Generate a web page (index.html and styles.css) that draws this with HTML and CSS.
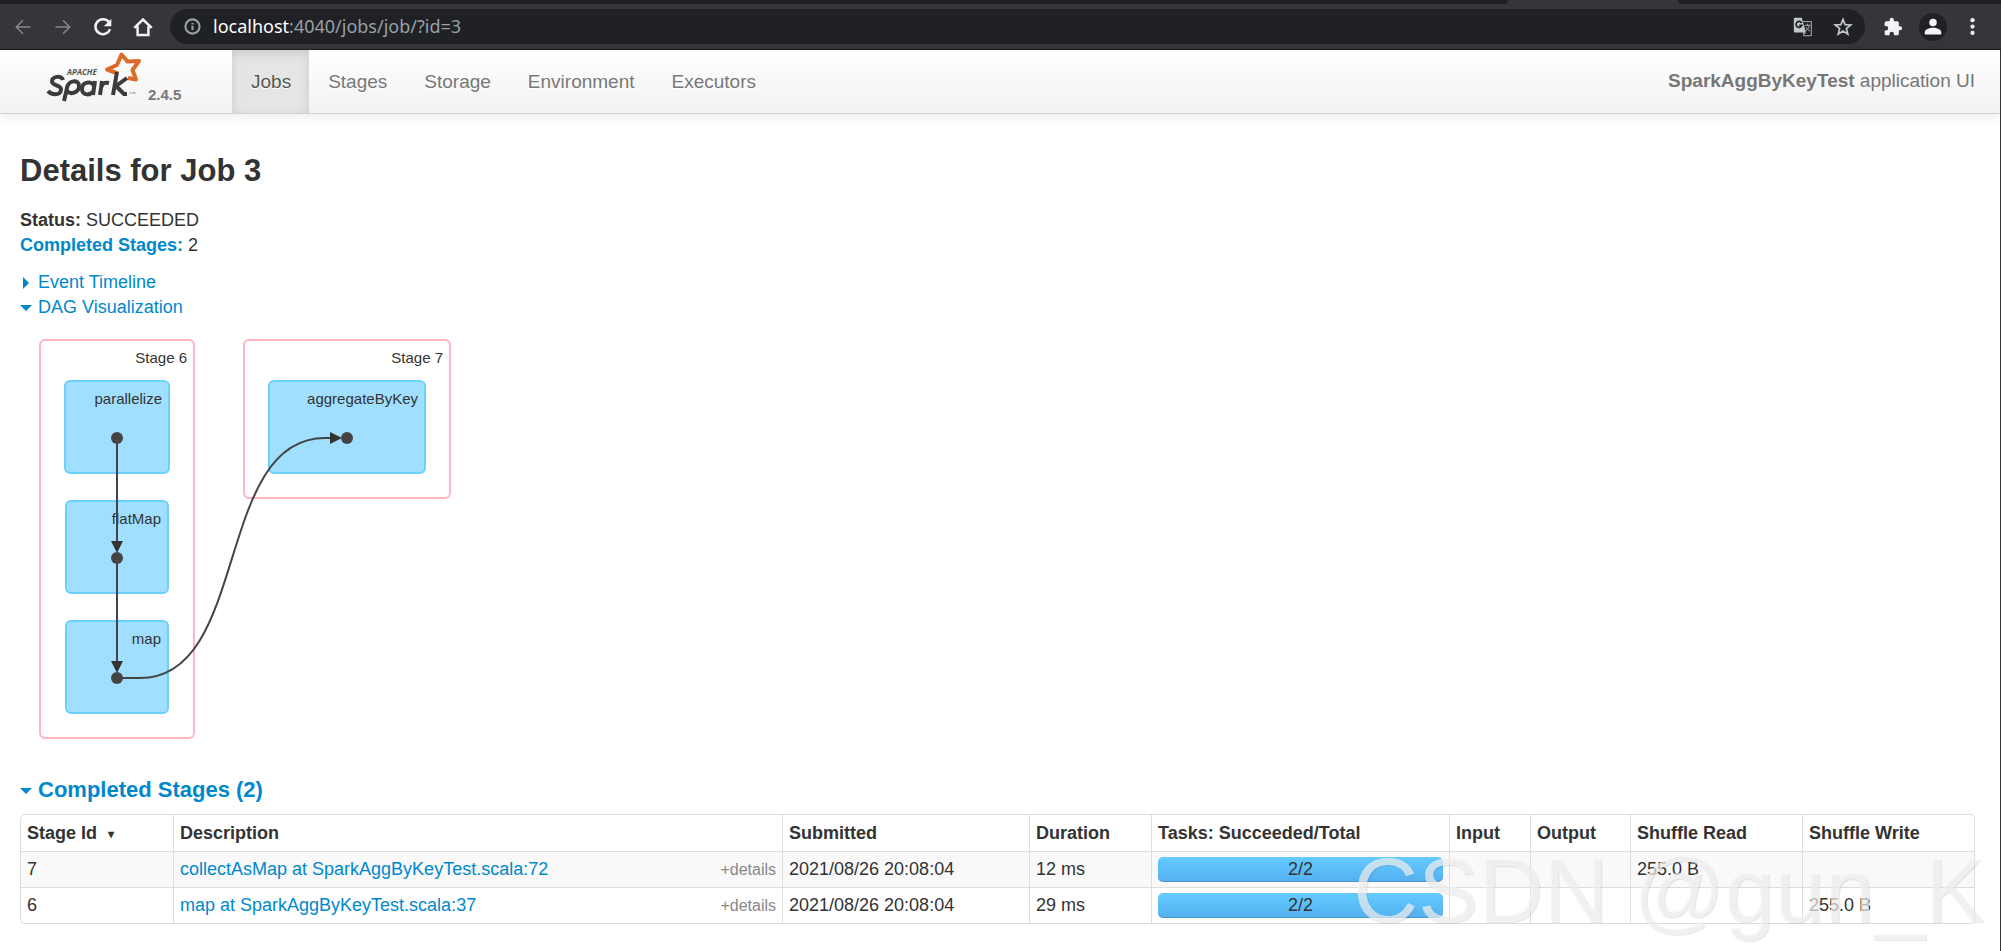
FILE: index.html
```
<!DOCTYPE html>
<html lang="en">
<head>
<meta charset="utf-8">
<title>SparkAggByKeyTest - Details for Job 3</title>
<link rel="stylesheet" href="styles.css">
</head>
<body>
<div class="browser">
  <div class="tabstrip"><span class="tab-gap"></span><span class="tab-active"></span><span class="tab-rest"></span></div>
  <div class="toolbar">
    <button class="tool dim" aria-label="Back"><svg viewBox="0 0 24 24"><path d="M22 12H4M12 3L3 12l9 9" class="line"/></svg></button>
    <button class="tool dim" aria-label="Forward"><svg viewBox="0 0 24 24"><path d="M2 12h18M12 3l9 9-9 9" class="line"/></svg></button>
    <button class="tool" aria-label="Reload"><svg viewBox="0 0 24 24"><path d="M19 6A9 9 0 1 0 20.500 14.500" class="line bold"/><path d="M22 2v9h-9z" class="solid"/></svg></button>
    <button class="tool" aria-label="Home"><svg viewBox="0 0 24 24"><path d="M1.500 13L12 3l10.500 10M5.500 11V21.500h13V11" class="line bold"/></svg></button>
    <div class="omnibox">
      <svg class="info" viewBox="0 0 24 24"><circle cx="12" cy="12" r="10" class="line bold"/><path d="M12 11v6M12 7v2" class="line bold"/></svg>
      <div class="address"><span class="host">localhost</span>:4040/jobs/job/?id=3</div>
      <button class="mark" aria-label="Translate"><svg viewBox="0 0 24 24"><path d="M11 5.500h11v17H12" class="thin"/><path d="M2.500 1h8l5 17.500h-13a1.500 1.500 0 0 1-1.500-1.500V2.500A1.500 1.500 0 0 1 2.500 1z" class="solid"/><path d="M10.500 7.200A3.600 3.600 0 1 0 10.700 10H7.500" class="cut"/><path d="M14 10h7M17.500 8v2M19.800 10c-.6 3-2.300 5-4.500 6.500M15.500 12c1 2 3 4 5 5" class="thin"/><path d="M12 18.500h3.500L12.500 22z" class="solid"/></svg></button>
      <button class="mark" aria-label="Bookmark"><svg viewBox="0 0 24 24"><path d="M12 2.800l2.500 6.400 6.800.4-5.300 4.300 1.800 6.600-5.800-3.700-5.800 3.700L8 13.900 2.700 9.600l6.800-.4z" class="line"/></svg></button>
    </div>
    <button class="tool ext" aria-label="Extensions"><svg viewBox="0 0 24 24"><path d="M20.500 11H19V7a2 2 0 0 0-2-2h-4V3.500a2.500 2.500 0 0 0-5 0V5H4a2 2 0 0 0-2 2v3.800h1.500a2.700 2.700 0 0 1 0 5.400H2V20a2 2 0 0 0 2 2h3.800v-1.500a2.700 2.700 0 0 1 5.400 0V22H17a2 2 0 0 0 2-2v-4h1.500a2.500 2.500 0 0 0 0-5z" class="solid"/></svg></button>
    <button class="avatar" aria-label="Profile"><svg viewBox="0 0 24 24"><circle cx="12" cy="6" r="5" class="solid"/><path d="M1 22v-3c0-4 6-6 11-6s11 2 11 6v3z" class="solid"/></svg></button>
    <button class="tool menu" aria-label="Menu"><svg viewBox="0 0 24 24"><circle cx="12" cy="3" r="3" class="solid"/><circle cx="12" cy="12" r="3" class="solid"/><circle cx="12" cy="21" r="3" class="solid"/></svg></button>
  </div>
</div>
<div class="page">
  <header class="navbar">
    <a class="brand" href="#">
      <svg class="logo" viewBox="0 0 98 52" role="img" aria-label="Apache Spark">
        <path d="M74 23.500L63 19.500l10-4.500L77.500 4.500 83.500 11.500 95 11l-6.500 9L92 29.500 84 28" class="star"/>
        <text x="23" y="25" class="apache">APACHE</text>
        <g class="letters">
          <path d="M19 30c-1-5-12-4-11 2 1 4 10 3 9 8-1 6-10 5-13 1"/>
          <path d="M20 51l3-13c1-8 12-9 12-2s-9 9-12 5"/>
          <path d="M51 31l-2 14M50 36c-2-6-12-4-12 3s9 7 12 1"/>
          <path d="M56 45l2-14M57 38c1-5 4-6 8-5"/>
          <path d="M69 45l4-23M83 28L72 36l8 8h3"/>
        </g>
        <path d="M85 43h3M89 44v-2l1 1 1-1v2" class="tm"/>
      </svg>
      <span class="version">2.4.5</span>
    </a>
    <nav class="nav">
      <a href="#" class="active">Jobs</a><a href="#">Stages</a><a href="#">Storage</a><a href="#">Environment</a><a href="#">Executors</a>
    </nav>
    <p class="app"><strong>SparkAggByKeyTest</strong> application UI</p>
  </header>
  <main class="content">
    <h1>Details for Job 3</h1>
    <ul class="summary">
      <li><strong>Status:</strong> SUCCEEDED</li>
      <li><a href="#completed"><strong>Completed Stages:</strong></a> 2</li>
    </ul>
    <div class="toggles">
      <a href="#"><span class="arrow right"></span>Event Timeline</a>
      <a href="#dag"><span class="arrow down"></span>DAG Visualization</a>
    </div>
    <svg id="dag" class="dag" width="440" height="410" viewBox="20 330 440 410" role="img" aria-label="DAG Visualization">
      <g class="stage"><rect x="40" y="340" width="154" height="398" rx="5"/><rect x="244" y="340" width="206" height="158" rx="5"/></g>
      <g class="op"><rect x="65" y="381" width="104" height="92" rx="5"/><rect x="66" y="501" width="102" height="92" rx="5"/><rect x="66" y="621" width="102" height="92" rx="5"/><rect x="269" y="381" width="156" height="92" rx="5"/></g>
      <g class="label"><text x="187" y="363">Stage 6</text><text x="443" y="363">Stage 7</text><text x="162" y="404">parallelize</text><text x="161" y="524">flatMap</text><text x="161" y="644">map</text><text x="418" y="404">aggregateByKey</text></g>
      <g class="edge"><path d="M117 438V546"/><path d="M117 558V666"/><path d="M117 678H140C250 678 214 438 325 438H336"/></g>
      <g class="head"><path d="M111 541h12l-6 12z"/><path d="M111 661h12l-6 12z"/><path d="M330 432v12l12-6z"/></g>
      <g class="node"><circle cx="117" cy="438" r="6"/><circle cx="117" cy="558" r="6"/><circle cx="117" cy="678" r="6"/><circle cx="347" cy="438" r="6"/></g>
    </svg>
    <h2 id="completed"><a href="#completed"><span class="arrow down"></span>Completed Stages (2)</a></h2>
    <table class="stages">
      <colgroup><col class="c-id"><col><col class="c-sub"><col class="c-dur"><col class="c-task"><col class="c-in"><col class="c-out"><col class="c-shuf"><col class="c-shuf"></colgroup>
      <thead><tr><th>Stage Id <span class="sort">▾</span></th><th>Description</th><th>Submitted</th><th>Duration</th><th>Tasks: Succeeded/Total</th><th>Input</th><th>Output</th><th>Shuffle Read</th><th>Shuffle Write</th></tr></thead>
      <tbody>
        <tr><td>7</td><td><div class="desc"><a href="#">collectAsMap at SparkAggByKeyTest.scala:72</a><span class="details">+details</span></div></td><td>2021/08/26 20:08:04</td><td>12 ms</td><td class="task"><div class="bar">2/2</div></td><td></td><td></td><td>255.0 B</td><td></td></tr>
        <tr><td>6</td><td><div class="desc"><a href="#">map at SparkAggByKeyTest.scala:37</a><span class="details">+details</span></div></td><td>2021/08/26 20:08:04</td><td>29 ms</td><td class="task"><div class="bar">2/2</div></td><td></td><td></td><td></td><td>255.0 B</td></tr>
      </tbody>
    </table>
  </main>
  <div class="watermark">CSDN @gun_K</div>
</div>
</body>
</html>
```
FILE: styles.css
```
* { box-sizing: border-box; }
body { margin: 0; min-height: 100vh; display: flex; flex-direction: column; background: #fff; color: #333; font: 18px/25px "Liberation Sans", Arial, sans-serif; }
a { color: #08c; text-decoration: none; }
button { border: 0; padding: 0; background: none; color: inherit; display: flex; align-items: center; justify-content: center; }

.browser { background: #35363a; border-bottom: 1px solid #202124; }
.tabstrip { display: flex; height: 4px; }
.tab-gap { flex: 1; background: #202124; border-bottom-right-radius: 4px; }
.tab-active { width: 170px; }
.tab-rest { width: 323px; background: #202124; border-bottom-left-radius: 4px; }
.toolbar { display: flex; align-items: center; height: 45px; padding: 0 14px 0 3px; color: #f1f3f4; }
.tool { width: 40px; height: 40px; }
.tool svg { width: 20px; height: 20px; }
.tool.dim { color: #87888b; }
.tool.dim svg { width: 18px; height: 18px; }
.omnibox { flex: 1; display: flex; align-items: center; height: 35px; margin: 0 10px 0 7px; padding: 0 12px 0 14px; border-radius: 18px; background: #202124; color: #9aa0a6; }
.info { width: 17px; height: 17px; margin-right: 12px; }
.address { flex: 1; font: 18px/25px "Noto Sans", "Open Sans", sans-serif; }
.host { color: #fff; }
.mark { width: 20px; height: 20px; margin-left: 20px; color: #c4c7ca; }
.mark svg { width: 20px; height: 20px; }
.ext { width: 36px; }
.avatar { width: 28px; height: 28px; margin: 0 10px 0 8px; border-radius: 50%; background: #202124; }
.avatar svg { width: 18px; height: 18px; }
.tool.menu { width: 30px; }
.tool.menu svg { width: 17px; height: 17px; }
.line, .thin, .cut { fill: none; stroke: currentColor; stroke-width: 2; }
.bold { stroke-width: 3; }
.thin { stroke-width: 1; }
.cut { stroke: #202124; }
.solid { fill: currentColor; }

.page { position: relative; flex: 1; border-right: 1px solid #35363a; }
.navbar { display: flex; height: 64px; background: linear-gradient(#fff, #f2f2f2); border-bottom: 1px solid #d4d4d4; box-shadow: 0 1px 12px rgba(0,0,0,.1); }
.brand { display: flex; width: 232px; padding-left: 44px; color: #777; }
.logo { width: 98px; height: 52px; }
.star { fill: none; stroke: #dc6a28; stroke-width: 4; stroke-linejoin: round; }
.apache { font: italic bold 8px "Open Sans", sans-serif; fill: #555; }
.letters { fill: none; stroke: #3c3a3b; stroke-width: 4; stroke-linejoin: round; }
.tm { fill: none; stroke: #aaa; stroke-width: 1; }
.version { margin: 32px 0 0 6px; font-size: 15px; font-weight: bold; }
.nav { display: flex; flex: 1; }
.nav a { padding: 19px 18px 0 19px; font-size: 19px; color: #777; text-shadow: 0 1px 0 #fff; }
.nav .active { color: #555; background: #e5e5e5; box-shadow: inset 0 3px 10px rgba(0,0,0,.125); }
.app { margin: 18px 25px 0 0; font-size: 19px; color: #777; }

.content { padding: 0 25px 0 20px; }
h1 { margin: 32px 0 12px; font-size: 31px; line-height: 50px; }
.summary { list-style: none; margin: 0; padding: 0; }
.toggles { display: flex; flex-direction: column; align-items: flex-start; margin-top: 12px; }
.arrow { display: inline-block; vertical-align: middle; margin-right: 6px; border: 6px solid transparent; }
.down { border-top-color: currentColor; border-bottom-width: 0; }
.right { border-left-color: currentColor; border-right-width: 0; margin: 0 9px 0 3px; }
.dag { display: block; margin-top: 10px; }
.stage rect { fill: #fff; stroke: #ffb5c2; stroke-width: 2; }
.op rect { fill: #a0dfff; stroke: #6cd0ff; stroke-width: 2; }
.label { font-size: 15px; fill: #333; text-anchor: end; }
.edge { fill: none; stroke: #444; stroke-width: 2; }
.head { fill: #333; }
.node { fill: #444; }
h2 { margin: 37px 0 12px; font-size: 22px; line-height: 25px; }

.stages { width: 100%; table-layout: fixed; border: 1px solid #ddd; border-left: 0; border-radius: 5px; border-collapse: separate; border-spacing: 0; }
.stages th, .stages td { height: 36px; padding: 5px 6px; border-left: 1px solid #ddd; text-align: left; }
.stages td { border-top: 1px solid #ddd; }
.stages tr > :first-child { border-left: 1px solid #ddd; }
.stages th:first-child { border-top-left-radius: 5px; }
.stages tr:last-child td:first-child { border-bottom-left-radius: 5px; }
.stages tbody tr:first-child td { background: #f9f9f9; }
.c-id { width: 153px; }
.c-sub { width: 247px; }
.c-dur { width: 122px; }
.c-task { width: 298px; }
.c-in { width: 81px; }
.c-out { width: 100px; }
.c-shuf { width: 172px; }
.sort { margin-left: 6px; font-size: 12px; vertical-align: 1px; line-height: 12px; }
.desc { display: flex; justify-content: space-between; }
.details { font-size: 16px; color: #888; }
.bar { height: 25px; border-radius: 5px; background: linear-gradient(#64cbff, #54b0f0); box-shadow: inset 0 -1px 0 rgba(0,0,0,.15); text-align: center; }

.watermark { position: absolute; right: 15px; bottom: 0; font: 90px/120px "Liberation Sans", Arial, sans-serif; color: rgba(245,245,245,.7); text-shadow: 1px 1px 1px rgba(0,0,0,.1); pointer-events: none; white-space: nowrap; }
```
